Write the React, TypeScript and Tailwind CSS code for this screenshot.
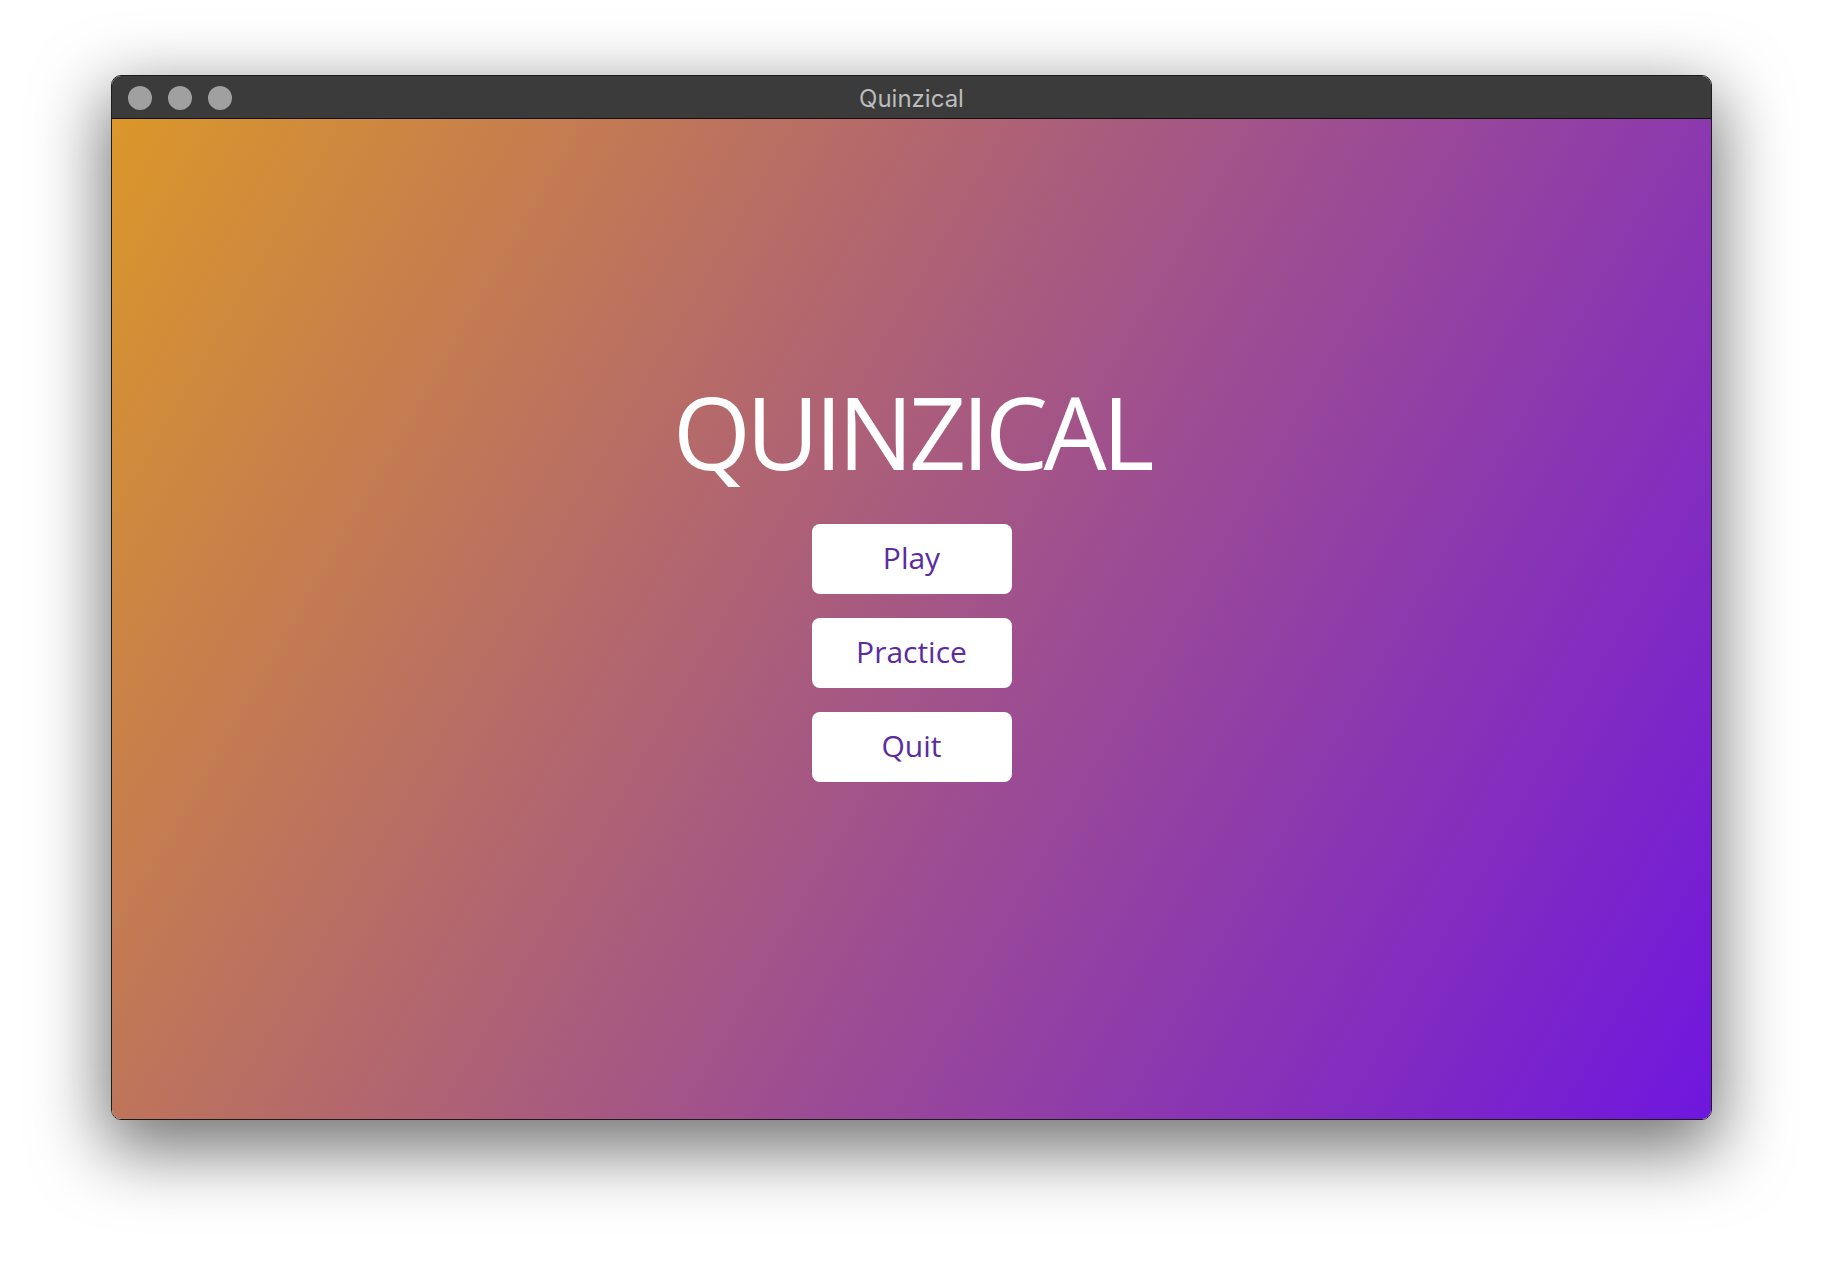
export default function App() {
  const buttons = ['Play', 'Practice', 'Quit'];

  return (
    <div className="w-[1824px] h-[1268px] bg-white pl-[111px] pt-[75px]">
      <div className="w-[1601px] h-[1045px] flex flex-col rounded-[10px] overflow-hidden border border-[#1c1c1c] shadow-[0_24px_70px_6px_rgba(0,0,0,0.55)]">
        {/* title bar */}
        <div className="relative h-[43px] shrink-0 bg-[#3b3b3b] border-b border-[#111] flex items-center justify-center">
          <div className="absolute left-[16px] top-[10px] flex gap-[16px]">
            <span className="w-[24px] h-[24px] rounded-full bg-[#a0a0a0]" />
            <span className="w-[24px] h-[24px] rounded-full bg-[#a0a0a0]" />
            <span className="w-[24px] h-[24px] rounded-full bg-[#a0a0a0]" />
          </div>
          <span className="pt-[4px] text-[24px] text-[#bcbcbc] font-['Inter',sans-serif] leading-none">Quinzical</span>
        </div>

        {/* content */}
        <div className="flex-1 flex flex-col items-center pt-[262px] bg-[linear-gradient(120deg,#db972a,#6f16df)]">
          <h1 className="text-[100px] leading-none text-white font-['Open_Sans',sans-serif] tracking-[-4.5px]">
            QUINZICAL
          </h1>
          <div className="mt-[43px] flex flex-col gap-[24px]">
            {buttons.map((b) => (
              <button
                key={b}
                className="w-[200px] h-[70px] pb-[4px] rounded-[8px] bg-white text-[#5b2c9f] text-[30px] font-['Open_Sans',sans-serif]"
              >
                {b}
              </button>
            ))}
          </div>
        </div>
      </div>
    </div>
  );
}
